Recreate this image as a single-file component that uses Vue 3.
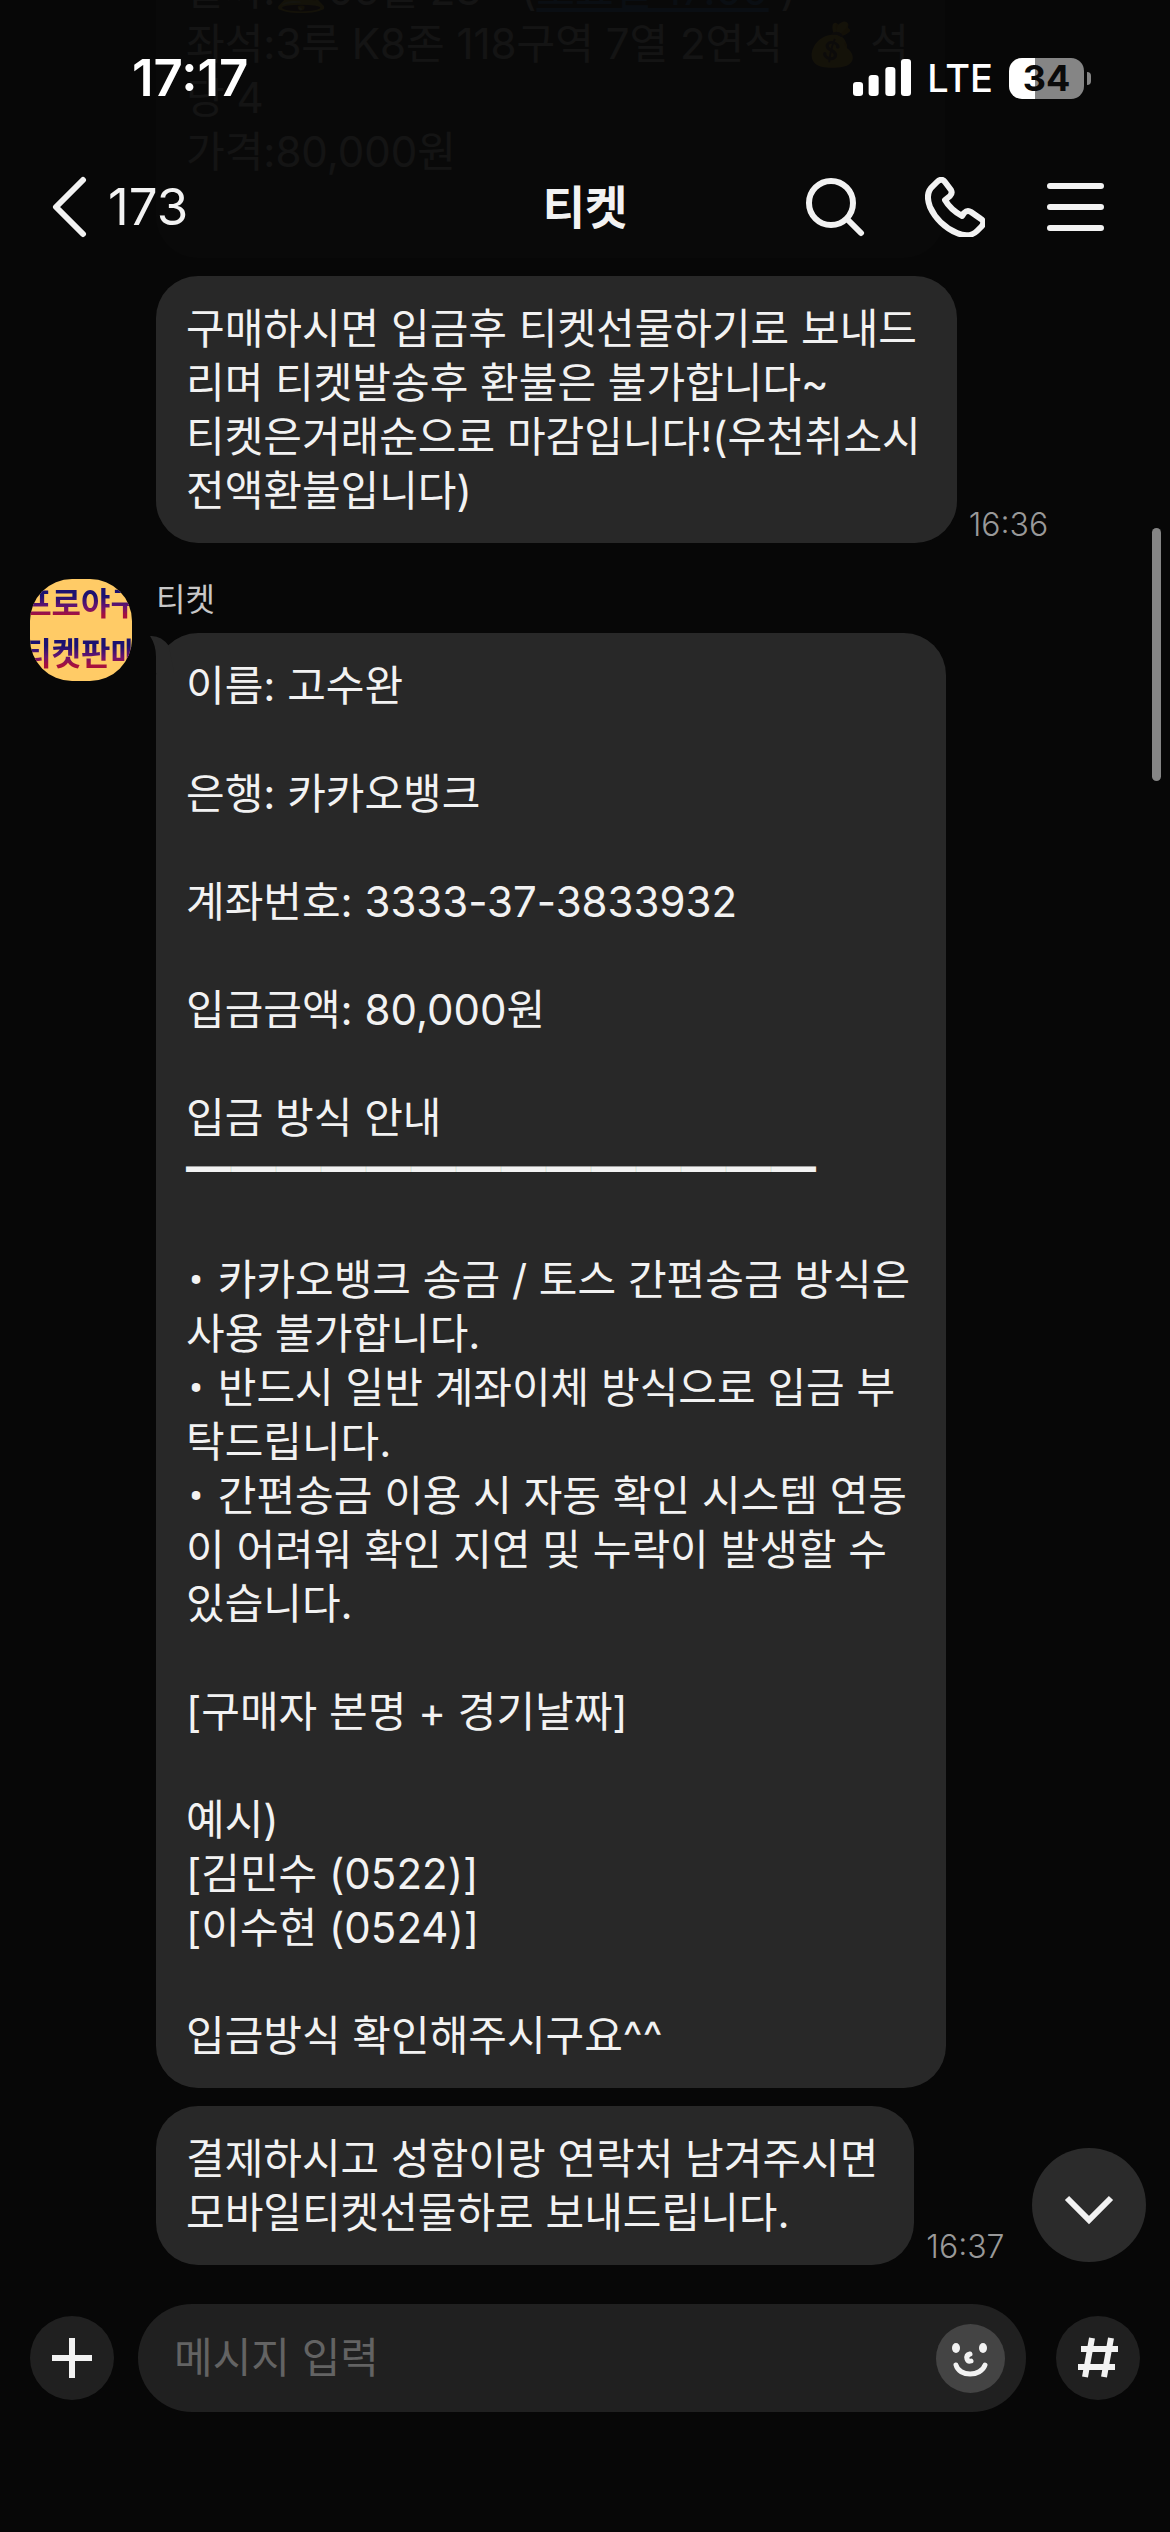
<script setup>
import { ref } from 'vue'

const draft = ref('')

const rule = '━'.repeat(14)

const seat = `
좌석:3루 K8존 118구역 7열 2연석  💰 석
당 4
가격:80,000원

`

const notice = `구매하시면 입금후 티켓선물하기로 보내드
리며 티켓발송후 환불은 불가합니다~
티켓은거래순으로 마감입니다!(우천취소시
전액환불입니다)`

const account = `이름: 고수완

은행: 카카오뱅크

계좌번호: 3333-37-3833932

입금금액: 80,000원

입금 방식 안내
`

const guides = [
  `카카오뱅크 송금 / 토스 간편송금 방식은
사용 불가합니다.
`,
  `반드시 일반 계좌이체 방식으로 입금 부
탁드립니다.
`,
  `간편송금 이용 시 자동 확인 시스템 연동
이 어려워 확인 지연 및 누락이 발생할 수
있습니다.
`
]

const example = `
[구매자 본명 + 경기날짜]

예시)
[김민수 (0522)]
[이수현 (0524)]

입금방식 확인해주시구요^^`

const closing = `결제하시고 성함이랑 연락처 남겨주시면
모바일티켓선물하로 보내드립니다.`
</script>

<template>
  <div class="chat">
    <main class="messages">
      <div class="row">
        <p class="bubble">날짜:🔔05월 23~ (<a class="link" href="#">토요일 17:00</a> ){{ seat }}</p>
      </div>
      <div class="row">
        <p class="bubble">{{ notice }}</p>
        <time class="time">16:36</time>
      </div>
      <section class="group">
        <div class="avatar"><span>프로야구</span><span>티켓판매</span></div>
        <div class="thread">
          <h2 class="sender">티켓</h2>
          <div class="row">
            <svg class="tail" viewBox="0 0 24 40" width="24" height="40" aria-hidden="true">
              <path d="M0 3Q11 2 19 13L24 40H6V24Q6 12 0 3Z" />
            </svg>
            <p class="bubble">{{ account }}<span class="rule">{{ rule + '\n\n' }}</span><template v-for="guide in guides" :key="guide"><span class="dot">•</span>{{ ' ' + guide }}</template>{{ example }}</p>
          </div>
          <div class="row">
            <p class="bubble">{{ closing }}</p>
            <time class="time">16:37</time>
          </div>
        </div>
      </section>
      <button class="jump" type="button" aria-label="맨 아래로">
        <svg viewBox="0 0 114 114" width="114" height="114"><path d="M35 50 57 72 79 50" /></svg>
      </button>
    </main>

    <form class="composer" @submit.prevent>
      <button class="round" type="button" aria-label="추가">
        <svg viewBox="0 0 84 84" width="84" height="84"><path d="M42 22V62M22 42H62" /></svg>
      </button>
      <div class="field">
        <input v-model="draft" type="text" placeholder="메시지 입력" aria-label="메시지 입력" />
        <button class="face" type="button" aria-label="이모티콘">
          <svg viewBox="0 0 69 69" width="69" height="69">
            <ellipse cx="20" cy="24" rx="4" ry="5" />
            <ellipse cx="47" cy="24" rx="4" ry="5" />
            <path d="M34 30Q30 31 31 35Q32 38 35 37" />
            <path d="M20 41C23 53 45 53 49 41" />
          </svg>
        </button>
      </div>
      <button class="round hash" type="button" aria-label="샵검색">
        <svg viewBox="0 0 84 84" width="84" height="84"><path d="M36 22 29 61M55 22 48 61M25 33H62M22 51H59" /></svg>
      </button>
    </form>

    <header class="top">
      <div class="status">
        <span class="clock">17:17</span>
        <div class="signals">
          <svg viewBox="0 0 52 38" width="58" height="38" preserveAspectRatio="none" aria-hidden="true">
            <rect x="0" y="23" width="9" height="14" rx="3" />
            <rect x="14" y="16" width="9" height="21" rx="3" />
            <rect x="29" y="8" width="9" height="29" rx="3" />
            <rect x="43" y="0" width="9" height="37" rx="3" />
          </svg>
          <span class="network">LTE</span>
          <span class="battery"><span>34</span></span>
        </div>
      </div>
      <nav class="bar">
        <button class="back" type="button" aria-label="뒤로">
          <svg viewBox="0 0 36 62" width="36" height="62"><path d="M32 4 5 31 32 58" /></svg>
          <span>173</span>
        </button>
        <h1 class="title">티켓</h1>
        <div class="tools">
          <button type="button" aria-label="검색">
            <svg viewBox="0 0 60 60" width="60" height="60"><circle cx="26" cy="26" r="22" /><path d="M42 42 56 56" /></svg>
          </button>
          <button type="button" aria-label="통화">
            <svg viewBox="0 0 60 60" width="60" height="60">
              <path d="M12 5L8 9C2 14 2 22 5 30C10 41 20 51 32 56C39 59 47 59 52 54L56 50C59 47 59 44 56 42L46 35C43 33 41 34 39 36L37 39C30 35 24 30 20 23L25 19C27 17 27 15 26 13L20 5C18 2 15 2 12 5Z" />
            </svg>
          </button>
          <button type="button" aria-label="메뉴">
            <svg viewBox="0 0 60 60" width="60" height="60"><path d="M5 9H56M5 30H56M5 51H56" /></svg>
          </button>
        </div>
      </nav>
    </header>
    <div class="scrollbar"></div>
  </div>
</template>

<style>
body {
  margin: 0;
  background: #070707;
}
</style>

<style scoped>
.chat {
  position: relative;
  display: flex;
  flex-direction: column;
  height: 100vh;
  overflow: hidden;
  background: #070707;
  color: #f2f2f2;
  font-family: Inter, "Noto Sans CJK KR", sans-serif;
  font-size: 42px;
  line-height: 54px;
}

button {
  padding: 0;
  border: 0;
  background: none;
  color: inherit;
  font: inherit;
  cursor: pointer;
}

svg {
  display: block;
  flex: none;
}

button svg {
  fill: none;
  stroke: #f2f2f2;
  stroke-width: 6px;
}

.messages {
  position: relative;
  flex: 1;
  min-height: 0;
  display: flex;
  flex-direction: column;
  justify-content: flex-end;
  gap: 18px;
  padding-bottom: 39px;
}

.row {
  position: relative;
  display: flex;
  align-items: flex-end;
  gap: 12px;
}

.messages > .row {
  margin-left: 156px;
}

.bubble {
  margin: 0;
  padding: 26px 36px 25px 30px;
  border-radius: 42px;
  background: #282828;
  white-space: pre-wrap;
}

.link {
  color: #3b8ee0;
}

.rule {
  font-family: "Noto Sans CJK KR", sans-serif;
  font-size: 45px;
  line-height: 1;
}

.dot {
  display: inline-block;
  width: 20px;
  font-family: Roboto, sans-serif;
  line-height: 1;
  text-align: center;
}

.time {
  padding-bottom: 6px;
  color: #999;
  font-size: 32px;
  font-weight: 300;
  line-height: 24px;
}

.group {
  display: flex;
  gap: 24px;
  margin-top: 18px;
  padding-left: 30px;
}

.avatar {
  display: flex;
  flex: none;
  flex-direction: column;
  align-items: center;
  gap: 18px;
  width: 102px;
  height: 102px;
  padding-top: 9px;
  box-sizing: border-box;
  overflow: hidden;
  border-radius: 42px;
  background: #ffcb66;
  font-size: 32px;
  font-weight: 700;
  line-height: 32px;
  white-space: nowrap;
}

.avatar span {
  background: linear-gradient(#1c1270 25%, #6b1470 60%, #a8103c 85%);
  background-clip: text;
  color: transparent;
}

.thread .row + .row {
  margin-top: 18px;
}

.sender {
  margin: 0 0 12px;
  color: #c8c8c8;
  font-size: 32px;
  font-weight: 400;
  line-height: 42px;
}

.tail {
  position: absolute;
  top: 0;
  left: -6px;
  fill: #282828;
}

.jump {
  position: absolute;
  right: 24px;
  bottom: 42px;
  border-radius: 50%;
  background: #2b2b2b;
}

.composer {
  display: flex;
  align-items: center;
  gap: 24px;
  padding: 0 30px 120px;
}

.round {
  flex: none;
  border-radius: 50%;
  background: #202020;
}

.hash {
  margin-left: 6px;
}

.field {
  display: flex;
  flex: 1;
  align-items: center;
  height: 108px;
  padding: 0 21px 0 36px;
  border-radius: 54px;
  background: #202020;
}

.field input {
  flex: 1;
  min-width: 0;
  padding: 0;
  border: 0;
  outline: 0;
  background: none;
  color: inherit;
  font: inherit;
}

.field input::placeholder {
  color: #636363;
  opacity: 1;
}

.face {
  border-radius: 50%;
  background: #444;
}

.face svg {
  stroke-width: 5px;
  stroke-linecap: round;
}

.face ellipse {
  fill: #f2f2f2;
  stroke: none;
}

.top {
  position: absolute;
  top: 0;
  right: 0;
  left: 0;
  padding-bottom: 12px;
  background: rgba(7, 7, 7, .95);
}

.status {
  display: flex;
  align-items: center;
  justify-content: space-between;
  height: 156px;
  padding: 0 79px 0 132px;
  box-sizing: border-box;
  color: white;
}

.clock {
  font-size: 51px;
  font-weight: 600;
}

.signals {
  display: flex;
  align-items: center;
  gap: 16px;
}

.signals svg {
  fill: white;
}

.network {
  font-size: 38px;
  font-weight: 500;
}

.battery {
  position: relative;
  display: flex;
  align-items: center;
  justify-content: center;
  width: 75px;
  height: 41px;
  margin-right: 7px;
  border-radius: 13px;
  background: linear-gradient(90deg, white 35%, #858585 35%);
  color: #0a0a0a;
  font-size: 36px;
  font-weight: 700;
}

.battery::after {
  content: "";
  position: absolute;
  right: -7px;
  width: 4px;
  height: 13px;
  border-radius: 0 6px 6px 0;
  background: #858585;
}

.bar {
  display: grid;
  grid-template-columns: 1fr auto 1fr;
  align-items: center;
  height: 102px;
  padding: 0 51px;
}

.back {
  display: flex;
  align-items: center;
  gap: 21px;
  font-size: 51px;
}

.back svg,
.tools svg {
  stroke-linecap: round;
  stroke-linejoin: round;
}

.title {
  margin: 0;
  font-size: 46px;
  font-weight: 700;
}

.tools {
  display: flex;
  justify-content: flex-end;
  gap: 60px;
  margin-right: 14px;
}

.scrollbar {
  position: absolute;
  top: 528px;
  right: 9px;
  width: 9px;
  height: 253px;
  border-radius: 5px;
  background: #858585;
}
</style>
